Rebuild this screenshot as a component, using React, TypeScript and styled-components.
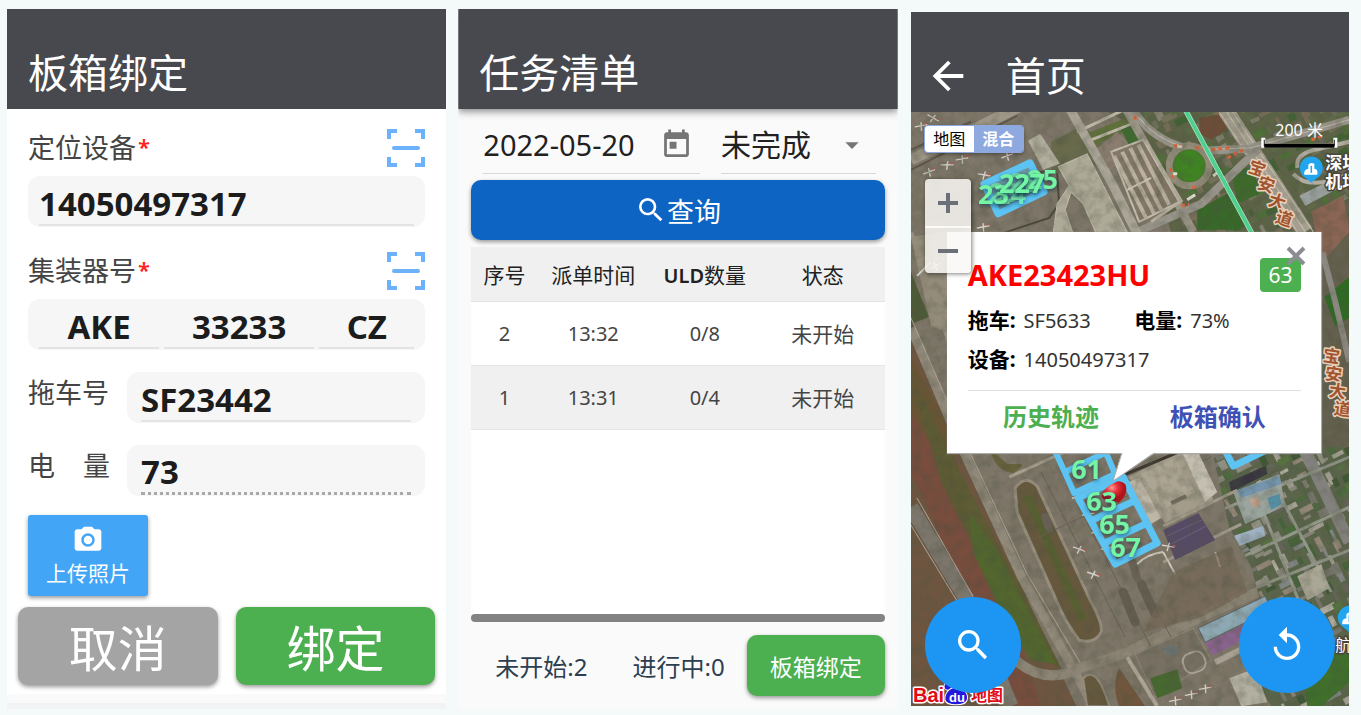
import React from "react";
import styled, { createGlobalStyle, css } from "styled-components";
import {
  MdArrowBack,
  MdArrowDropDown,
  MdPhotoCamera,
  MdReplay,
  MdSearch,
  MdToday,
} from "react-icons/md";

const GlobalStyle = createGlobalStyle`
  *, *::before, *::after { box-sizing: border-box; }
  body {
    margin: 0;
    background: #f4faf9;
    font-family: "Noto Sans", "Noto Sans CJK SC", sans-serif;
    color: #212121;
  }
  button, input, select {
    font-family: inherit;
    color: inherit;
    margin: 0;
    padding: 0;
    border: 0;
    background: none;
  }
  button { cursor: pointer; }
  svg { display: block; }
`;

/* ---------- shared shell ---------- */

const Page = styled.main`
  display: grid;
  grid-template-columns: repeat(3, minmax(0, 1fr));
  gap: 12px;
  min-height: 100vh;
  padding: 9px 12px 6px 7px;
`;

const Screen = styled.section<{ $bg: string }>`
  display: flex;
  flex-direction: column;
  min-width: 0;
  background: ${(p) => p.$bg};
`;

const MapScreen = styled(Screen)`
  margin: 3px 0 3px 1px;
`;

const AppBar = styled.header<{ $raised?: boolean }>`
  display: flex;
  align-items: center;
  gap: 42px;
  height: 100px;
  padding: 40px 21px 12px;
  background: #47494e;
  color: #fff;
  z-index: 1;
  ${(p) =>
    p.$raised &&
    css`
      box-shadow: 0 2px 8px rgba(0, 0, 0, 0.5);
      clip-path: inset(0 0 -12px 0);
    `}
`;

const AppTitle = styled.h1`
  margin: 0;
  font-size: 40px;
  line-height: 48px;
  font-weight: 400;
`;

const BackButton = styled.button`
  display: flex;
  align-items: center;
  justify-content: center;
  width: 32px;
  height: 48px;
  svg {
    flex: none;
  }
`;

const RaisedButton = styled.button<{ $color: string }>`
  display: flex;
  align-items: center;
  justify-content: center;
  border-radius: 10px;
  background: ${(p) => p.$color};
  color: #fff;
  box-shadow: 0 2px 4px rgba(0, 0, 0, 0.4);
`;

/* ---------- binding form ---------- */

const Form = styled.form`
  display: flex;
  flex-direction: column;
  flex: 1;
  padding-top: 20px;
`;

const Fields = styled.div`
  display: flex;
  flex-direction: column;
  gap: 22px;
  padding: 0 21px;
`;

const StackedField = styled.div`
  display: flex;
  flex-direction: column;
  gap: 9px;
  & + & {
    margin-top: 3px;
  }
`;

const LabelRow = styled.div`
  display: flex;
  align-items: center;
  justify-content: space-between;
  height: 38px;
`;

const FieldLabel = styled.label`
  display: flex;
  justify-content: space-between;
  font-size: 27px;
  line-height: 40px;
  color: #444;
`;

const Required = styled.span`
  margin-left: 2px;
  font-size: 22px;
  font-weight: 600;
  line-height: 36px;
  color: #f22;
`;

const InlineField = styled.div`
  display: grid;
  grid-template-columns: 82px minmax(0, 1fr);
  column-gap: 17px;
  align-items: start;
  ${FieldLabel} {
    padding-top: 1px;
  }
`;

const FieldBox = styled.div<{ $inset: number }>`
  display: flex;
  gap: 5px;
  height: 51px;
  padding: 0 ${(p) => p.$inset}px;
  border-radius: 12px;
  background: #f6f6f6;
`;

const BoldInput = styled.input<{ $grow?: number; $center?: boolean; $dotted?: boolean }>`
  flex: ${(p) => p.$grow ?? 1} 1 0;
  min-width: 0;
  width: 0;
  height: 50px;
  padding-top: 6px;
  font-size: 33px;
  font-weight: 700;
  color: #1c1c1c;
  text-align: ${(p) => (p.$center ? "center" : "left")};
  border-bottom: ${(p) => (p.$dotted ? "3px dotted #a9a9a9" : "2px solid #e4e4e4")};
  outline: none;
`;

const UploadButton = styled(RaisedButton)`
  flex-direction: column;
  gap: 2px;
  width: 120px;
  height: 81px;
  margin: 19px 21px 0;
  border-radius: 3px;
  font-size: 21px;
  line-height: 30px;
`;

const FormActions = styled.div`
  display: flex;
  gap: 18px;
  padding: 11px 11px 9px;
`;

const ActionButton = styled(RaisedButton)`
  flex: 1;
  height: 78px;
  padding-top: 4px;
  font-size: 49px;
  line-height: 60px;
`;

const FormFooter = styled.div`
  flex: 1;
  min-height: 15px;
  background: #fafafa;
  border-bottom: 6px solid #f2f3f4;
`;

/* ---------- task list ---------- */

const TaskBody = styled.div`
  display: flex;
  flex-direction: column;
  flex: 1;
  padding: 10px 13px 13px;
`;

const Filters = styled.div`
  display: grid;
  grid-template-columns: 217fr 155fr;
  gap: 21px;
  padding: 0 9px 0 12px;
`;

const FilterBox = styled.div`
  position: relative;
  display: flex;
  align-items: center;
  height: 55px;
  padding-bottom: 3px;
  border-bottom: 1px solid #d8d8d8;
`;

const DateInput = styled.input`
  flex: 1;
  min-width: 0;
  width: 0;
  font-size: 29px;
  outline: none;
`;

const CalendarButton = styled.button`
  margin-right: 7px;
  font-size: 33px;
  color: #757575;
`;

const StatusSelect = styled.select`
  flex: 1;
  width: 100%;
  appearance: none;
  font-size: 30px;
`;

const SelectArrow = styled.span`
  position: absolute;
  right: 8px;
  font-size: 32px;
  color: #757575;
  pointer-events: none;
`;

const QueryButton = styled(RaisedButton)`
  flex: none;
  height: 60px;
  margin: 6px 0 7px;
  font-size: 27px;
  svg {
    font-size: 32px;
  }
`;

const TableWrap = styled.div`
  flex: 1;
  background: #fff;
`;

const TaskTable = styled.table`
  width: 100%;
  table-layout: fixed;
  border-collapse: collapse;
  text-align: center;
`;

const Col = styled.col<{ $w: number }>`
  width: ${(p) => p.$w}%;
`;

const HeadCell = styled.th`
  height: 54px;
  padding: 0;
  background: #f0f0f0;
  border-bottom: 1px solid #e2e2e2;
  font-size: 21px;
  font-weight: 400;
  white-space: nowrap;
  b {
    font-size: 20px;
    font-weight: 600;
  }
`;

const Row = styled.tr<{ $alt?: boolean }>`
  background: ${(p) => (p.$alt ? "#f0f0f0" : "#fff")};
`;

const Cell = styled.td<{ $text?: boolean }>`
  height: 64px;
  padding: 0;
  border-bottom: 1px solid #e6e6e6;
  font-size: ${(p) => (p.$text ? 21 : 20)}px;
  color: #444;
`;

const ScrollThumb = styled.div`
  height: 8px;
  border-radius: 4px;
  background: #838383;
`;

const TaskFooter = styled.footer`
  display: flex;
  align-items: center;
  justify-content: space-between;
  padding: 13px 0 0 24px;
  font-size: 24px;
  color: #2c3e50;
`;

const Counts = styled.div`
  display: flex;
  gap: 45px;
  white-space: nowrap;
`;

const BindButton = styled(RaisedButton)`
  flex: none;
  width: 138px;
  height: 61px;
  font-size: 23px;
`;

/* ---------- map ---------- */

const MapArea = styled.div`
  position: relative;
  flex: 1;
  min-height: 594px;
  overflow: hidden;
  background: #7d7466;
`;

const MapCanvas = styled.svg`
  position: absolute;
  inset: 0;
  width: 100%;
  height: 100%;
`;

const InfoWindow = styled.article`
  position: absolute;
  top: 120px;
  left: 36px;
  right: 27px;
  padding: 26px 20px 10px 21px;
  background: #fff;
  border: 1px solid #ababab;
  border-width: 0 1px 1px 0;
  box-shadow: 0 0 1px #999;
`;

const Tail = styled.svg`
  position: absolute;
  top: 220px;
  left: 164px;
`;

const InfoHead = styled.header`
  display: flex;
  align-items: center;
  justify-content: space-between;
  margin-bottom: 9px;
`;

const InfoTitle = styled.h2`
  margin: 0;
  font-size: 29px;
  line-height: 34px;
  color: #f00;
`;

const Badge = styled.span`
  width: 41px;
  border-radius: 4px;
  background: #4caf50;
  color: #fff;
  font-size: 21px;
  line-height: 34px;
  text-align: center;
`;

const CloseButton = styled.button`
  position: absolute;
  top: 14px;
  right: 15px;
`;

const InfoGrid = styled.dl`
  display: grid;
  grid-template-columns: 1fr 1fr;
  margin: 0 0 11px;
`;

const InfoItem = styled.div<{ $wide?: boolean }>`
  display: flex;
  gap: 8px;
  grid-column: ${(p) => (p.$wide ? "1 / -1" : "auto")};
  line-height: 39px;
  dt {
    font-size: 21px;
    font-weight: 700;
    color: #000;
  }
  dd {
    margin: 0;
    font-size: 20px;
    color: #333;
  }
`;

const InfoLinks = styled.nav`
  display: grid;
  grid-template-columns: 1fr 1fr;
  border-top: 1px solid #e0e0e0;
`;

const InfoLink = styled.a<{ $color: string }>`
  font-size: 24px;
  line-height: 52px;
  font-weight: 700;
  text-align: center;
  text-decoration: none;
  color: ${(p) => p.$color};
`;

const MapTypes = styled.div`
  position: absolute;
  top: 14px;
  left: 14px;
  display: flex;
  border-radius: 3px;
  overflow: hidden;
  box-shadow: 0 0 0 1px #8ea8e0, 0 2px 4px rgba(0, 0, 0, 0.4);
`;

const MapType = styled.button<{ $active?: boolean }>`
  width: 49px;
  height: 26px;
  font-size: 16px;
  line-height: 24px;
  background: ${(p) => (p.$active ? "#8ea8e0" : "#fff")};
  color: ${(p) => (p.$active ? "#fff" : "#000")};
  font-weight: ${(p) => (p.$active ? 700 : 400)};
`;

const ZoomControl = styled.div`
  position: absolute;
  top: 67px;
  left: 14px;
  width: 46px;
  border-radius: 4px;
  background: rgba(250, 248, 246, 0.85);
  box-shadow: 1px 1px 4px rgba(0, 0, 0, 0.5);
`;

const ZoomButton = styled.button`
  display: flex;
  align-items: center;
  justify-content: center;
  width: 46px;
  height: 47px;
  & + & {
    border-top: 2px solid rgba(255, 255, 255, 0.8);
  }
`;

const Fabs = styled.div`
  position: absolute;
  left: 14px;
  right: 14px;
  bottom: 13px;
  display: flex;
  justify-content: space-between;
`;

const Fab = styled.button`
  display: flex;
  align-items: center;
  justify-content: center;
  width: 96px;
  height: 96px;
  border-radius: 50%;
  background: #1d96f3;
  color: #fff;
  font-size: 40px;
`;

const MapText = styled.text<{ $size: number; $fill: string; $halo: string; $bold?: boolean }>`
  font-size: ${(p) => p.$size}px;
  font-weight: ${(p) => (p.$bold ? 700 : 400)};
  fill: ${(p) => p.$fill};
  stroke: ${(p) => p.$halo};
  stroke-width: 3px;
  stroke-linejoin: round;
  paint-order: stroke;
`;

const SpotText = styled.text`
  font-size: 27px;
  font-weight: 700;
  fill: #74f5a6;
  filter: drop-shadow(0 2px 2px rgba(0, 40, 60, 0.6));
`;

/* ---------- map drawing ---------- */

type Block = { x: number; y: number; w: number; h: number; c: string };

// Fixed-seed generator, so the town looks the same on every render.
function makeBlocks(seed: number, x0: number, y0: number, x1: number, y1: number, palette: string[]) {
  let s = seed;
  const rnd = () => {
    s = (s * 1664525 + 1013904223) % 4294967296;
    return s / 4294967296;
  };
  const out: Block[] = [];
  for (let y = y0; y < y1; y += 11) {
    for (let x = x0; x < x1; x += 13) {
      const tall = rnd() > 0.5;
      out.push({
        x: x + rnd() * 6,
        y: y + rnd() * 5,
        w: tall ? 3 + rnd() * 5 : 7 + rnd() * 10,
        h: tall ? 8 + rnd() * 9 : 3 + rnd() * 5,
        c: palette[Math.floor(rnd() * palette.length)],
      });
    }
  }
  return out;
}

const TOWN = ["#44633a", "#55743f", "#3c5733", "#96948a", "#aaa59a", "#7b7872", "#66645c", "#bbb7ab", "#85888a", "#9a8b7e", "#4b6c3c", "#8d8a80"];
const PARK = ["#3f6232", "#4d7236", "#5c6b48", "#77745f", "#8b887a", "#606a4a", "#7d705d", "#6f6c60"];
const APRON = ["#857b6c", "#786f61", "#7f7567", "#887e70", "#756c5f"];

const town = makeBlocks(7, 60, 440, 420, 780, TOWN);
const park = makeBlocks(23, 190, 60, 440, 420, PARK);
const apron = makeBlocks(91, -300, -40, 340, 760, APRON);

const Blocks = ({ items, opacity = 1 }: { items: Block[]; opacity?: number }) => (
  <g transform="rotate(-27)" opacity={opacity}>
    {items.map((b, i) => (
      <rect key={i} x={b.x} y={b.y} width={b.w} height={b.h} fill={b.c} />
    ))}
  </g>
);

const planes = [
  [10, 14, 20], [22, 6, 60], [18, 60, 10], [36, 53, 30], [51, 47, 20], [96, 44, 10], [73, 63, 40], [72, 115, 20],
  [24, 154, 0], [123, 310, 10], [132, 329, 30], [167, 384, 10], [177, 402, 20], [186, 419, 10], [196, 436, 20],
  [168, 437, 50], [182, 462, 50], [257, 434, 40], [264, 588, 20], [280, 582, 20], [294, 576, 20],
];

const Plane = ({ at }: { at: number[] }) => (
  <g transform={`translate(${at[0]} ${at[1]}) rotate(${at[2]})`} stroke="#d6d1c8" strokeWidth="1.400" strokeLinecap="round">
    <path d="M-5 3 5-3M-1-3 2 4" />
    <path d="M3-3 5-5" stroke="#b0584e" />
  </g>
);

const Pin = ({ x, y }: { x: number; y: number }) => (
  <g transform={`translate(${x} ${y})`}>
    <path d="M0 13-6 8A11.500 11.500 0 1 1 6 8Z" fill="#21a5ee" />
    <path d="M-7 5Q-8 0-3-1V-5Q-1-8 3-6V-1Q7-1 6 5Z" fill="#fff" />
    <path d="M0-4V3" stroke="#21a5ee" strokeWidth="1.500" />
  </g>
);

const roadNames = [
  { chars: [[336, 60], [345, 76], [356, 93], [363, 110]], rot: 18 },
  { chars: [[411, 249], [413, 267], [417, 284], [422, 302]], rot: 8 },
];

const SatelliteMap = () => (
  <MapCanvas viewBox="0 0 438 594" preserveAspectRatio="xMidYMid slice" role="img" aria-label="卫星地图">
    <defs>
      <clipPath id="town">
        <path d="M300 335H438V594H360L340 560 352 500 340 455 318 415Z" />
      </clipPath>
      <clipPath id="park">
        <path d="M196 0H438V345H380V130H262L244 60 215 10Z" />
      </clipPath>
      <filter id="grain" x="0" y="0" width="100%" height="100%" colorInterpolationFilters="sRGB">
        <feTurbulence type="fractalNoise" baseFrequency="0.09" numOctaves="4" seed="4" />
        <feColorMatrix values="0 0 0 0 0.300 0 0 0 0 0.320 0 0 0 0 0.250 0 0 0 2.200 -0.850" />
      </filter>
      <filter id="soft" x="0" y="0" width="100%" height="100%">
        <feGaussianBlur stdDeviation="0.600" />
      </filter>
      <radialGradient id="marker" cx="0.4" cy="0.3">
        <stop offset="0" stopColor="#ff9a90" />
        <stop offset="0.500" stopColor="#e8303a" />
        <stop offset="1" stopColor="#b0141c" />
      </radialGradient>
    </defs>

    <g filter="url(#soft)">
      <rect width="438" height="594" fill="#7d7668" />
      <Blocks items={apron} opacity={0.3} />

      {/* grass and runway on the west side */}
      <path d="M0 206 49 341 111 475 165 594H0Z" fill="#6e5540" />
      <path d="M0 160 18 205 0 212Z" fill="#4e5b38" />
      <path d="M0 245 30 300 60 400 40 400 0 320Z" fill="#66552f" opacity="0.700" />
      <path d="M0 300 60 400 130 594H108L0 360Z" fill="#784d3c" />
      <path d="M0 265 34 330 70 400 110 475 152 560 120 530 70 450 30 370Z" fill="#5d5b34" />
      <path d="M58 400 84 436 145 552 120 548 90 500 62 440Z" fill="#52662d" />
      <path d="M0 395 56 488 100 594" stroke="#7c766c" strokeWidth="15" fill="none" />
      <path d="M6 386 62 484M-8 400 48 492" stroke="#aaa396" strokeWidth="1" fill="none" />
      <path d="M0 216 49 332 111 466 165 562 182 594" stroke="#91897a" strokeWidth="9" fill="none" />
      <path d="M0 206 54 330 116 462 170 552" stroke="#aaa293" strokeWidth="1" fill="none" />
      <path d="M0 120 20 180 60 290" stroke="#9a9182" strokeWidth="4" fill="none" />
      <path d="M72 330 96 352 108 352Q116 352 102 361 90 360 84 350L60 300Z" fill="#66603a" />
      <path d="M60 300 92 337" stroke="#5f5e36" strokeWidth="8" />
      <path d="M104 376Q114 362 126 374L180 490Q192 512 190 520 184 532 168 528 154 510 146 490L106 400Z" fill="#66593c" stroke="#968d7d" strokeWidth="3" />
      <path d="M116 384 172 508" stroke="#585f30" strokeWidth="8" />
      <path d="M72 300 94 337M98 365 164 335" stroke="#a79f90" strokeWidth="3" />
      <path d="M96 540Q130 576 168 556L214 541 300 500 360 474" stroke="#8c8475" strokeWidth="10" fill="none" />
      <path d="M172 566Q186 552 198 594H176Z" fill="#66593d" stroke="#958b7c" strokeWidth="2" />
      <path d="M208 556 234 594H208Q200 574 208 556Z" fill="#70563d" />
      <path d="M128 425 300 345M130 360 214 525M150 360 240 535M214 440 268 540" stroke="#6b6357" strokeWidth="1" />
      <path d="M212 480 224 510M230 472 244 502" stroke="#645c51" strokeWidth="9" strokeLinecap="round" />
      <path d="M218 440 226 466M134 405 138 416" stroke="#6a6257" strokeWidth="8" strokeLinecap="round" />

      {/* aprons and taxiway at the north side */}
      <path d="M0 48 70 14 110-6" stroke="#9d9585" strokeWidth="11" fill="none" />
      <path d="M0 38 60 10M0 58 106 4" stroke="#5e564b" strokeWidth="2" fill="none" />
      <path d="M120 60 146 60 148 92 138 106 90 122" stroke="#4b463e" strokeWidth="2" fill="none" />
      <path d="M0 125 60 116V230L20 214Z" fill="#948c7a" />
      <path d="M20 150 6 164" stroke="#d9d6cf" strokeWidth="2" />

      {/* roads and green areas at the north-east side */}
      <g clipPath="url(#park)">
        <rect x="140" width="298" height="345" fill="#5d6446" />
        <Blocks items={park} opacity={0.85} />
        <path d="M288 6 312 2 318 16 300 28 288 22Z" fill="#6d4d38" />
        <path d="M286 98 316 82 332 96 330 118H286Z" fill="#38672a" />
        <path d="M320 58 342 56 348 82 326 92Z" fill="#3e6a2c" />
        <path d="M398 110 438 88V345H411V150Z" fill="#65604f" />
        <path d="M400 100 432 84 438 120 411 150Z" fill="#8b6554" />
        <path d="M388 84 424 66 428 76 394 94Z" fill="#9aa2a0" />
        <path d="M413 185 438 165V206L424 214Z" fill="#2f6a24" />
        <path d="M411 140 424 190 438 250" stroke="#8a8880" strokeWidth="6" fill="none" />
      </g>
      <path d="M140 30 172 14 200 40 176 60 140 62Z" fill="#686a4c" />
      <path d="M175 22 225 2 228 14 182 34Z" fill="#5f6f3a" />
      <path d="M166 20 230-10M180 28 226 10" stroke="#bdb7a8" strokeWidth="3" />
      <path d="M182 40 206 20 226 40 196 60Z" fill="#8b7d70" />
      <path d="M210 18 224 12 230 30 218 34Z" fill="#3f6b30" />
      <path d="M314-2 394 120" stroke="#a59f90" strokeWidth="16" />
      <path d="M314-2 394 120M308 0 386 120M321 0 402 120" stroke="#c6bfae" strokeWidth="1" />
      <path d="M214-4 244 50 282 120" stroke="#9c9688" strokeWidth="8" fill="none" />
      <path d="M222-2Q244 34 290 39L337 37 438 8M346 38 290 92 226 120" stroke="#98948a" strokeWidth="8" fill="none" />
      <path d="M228 6Q250 34 290 38L340 36 438 8" stroke="#c0baad" strokeWidth="1" fill="none" />
      <circle cx="278" cy="54" r="20" fill="#4a7a2e" stroke="#938c7a" strokeWidth="7" />
      <circle cx="278" cy="54" r="15" fill="#3f8424" />
      <path d="M224 4v5M262 34h8M284 36h8M300 38 318 36M259 56l3 12M281 76l8-2M270 94l8-2M262 78l3 6M316 46 332 38M400 28 412 24" stroke="#d8663a" strokeWidth="3" strokeDasharray="4 3" />
      <path d="M266 35h5M276 88l8-5M262 62h4M302 64l5-4" stroke="#e0dccf" strokeWidth="3" />
      <path d="M386 56Q384 42 404 38L438 30M382 62Q398 80 438 62" stroke="#b2ada2" strokeWidth="4" fill="none" />

      {/* terminal buildings */}
      <path d="M117 29 129 22 149 52 132 58Z" fill="#b3af9e" />
      <path d="M147 55 176 42 218 124H186L172 92 160 80 154 98 162 122H142L146 92 158 74Z" fill="#aeaa98" stroke="#c4bfb0" />
      <path d="M158-4 200 70 226 122" stroke="#aaa596" strokeWidth="9" fill="none" />
      <path d="M200 40 232 28 268 90 228 110Z" fill="#847868" stroke="#c4bdae" strokeWidth="2" />
      <path d="M203 44 235 106M211 40 243 102M219 36 250 98M227 33 258 93" stroke="#bbb2a2" strokeWidth="4" />
      <path d="M216 78 240 66" stroke="#cfc7b6" strokeWidth="2" />
      <path d="M234 28 270 89 240 110" stroke="#b5ad9e" strokeWidth="3" fill="none" />

      {/* town on the east side */}
      <g clipPath="url(#town)">
        <rect x="290" y="300" width="148" height="294" fill="#5a6549" />
        <Blocks items={town} opacity={0.9} />
        <path d="M392 335 438 430" stroke="#83817d" strokeWidth="12" />
        <path d="M305 400 438 345M320 450 438 395M334 480 438 438M352 400 400 520M372 390 420 480" stroke="#929789" strokeWidth="3" />
        <path d="M322 380 368 362 374 394 334 412Z" fill="#9ba59f" />
        <path d="M326 378 368 364 370 372 330 386Z" fill="#7495ae" />
        <path d="M356 386 368 382 370 392 360 398Z" fill="#5391a8" />
        <path d="M338 388 346 384 350 392 342 396Z" fill="#c2a18c" />
        <path d="M322 424 352 414 354 424 328 434Z" fill="#a0b3c4" />
        <path d="M386 464 410 452 418 476 396 488Z" fill="#aaa796" />
        <path d="M318 370 354 354 356 362 320 380Z" fill="#37343f" />
        <path d="M392 560 438 530V570L410 594H396Z" fill="#3f6f2c" />
      </g>
      <path d="M217 365 270 338H284L302 388 254 411Z" fill="#a39c8b" />
      <path d="M230 362 264 346 284 380 252 398Z" fill="#ada594" />
      <path d="M270 338 284 334 306 380 294 390Z" fill="#c4bfb0" />
      <path d="M217 370 228 366 250 406 240 412Z" fill="#beb6a7" />
      <path d="M260 391 275 384" stroke="#726a5f" strokeWidth="4" />
      <path d="M210 364 272 338" stroke="#3b352e" strokeWidth="3" />
      <path d="M252 414 326 378M252 450 330 412" stroke="#a29a8c" strokeWidth="3" />
      <path d="M252 418 287 401 304 428 264 448Z" fill="#574c66" />
      <path d="M260 432 295 414M256 424 290 408" stroke="#6d627b" strokeWidth="1" />
      <path d="M226 452Q236 442 252 440M252 440 264 462M304 440 309 455" stroke="#cfc8b9" strokeWidth="2" fill="none" />
      <path d="M262 460 320 434 336 480 290 505 232 520Z" fill="#756656" opacity="0.700" />
      <path d="M224 542 282 516 300 548 244 585Z" fill="#787163" stroke="#8f8778" />
      <rect x="272" y="540" width="22" height="20" rx="8" fill="none" stroke="#a8a193" strokeWidth="2" transform="rotate(-20 283 550)" />
      <ellipse cx="260" cy="538" rx="8" ry="5" fill="#6d7575" />
      <path d="M287 516 354 484 360 498 294 530Z" fill="#8ea9b4" stroke="#59636a" />
      <path d="M294 531 360 499 364 512 302 543Z" fill="#8b6490" />
      <path d="M304 550 370 518" stroke="#a8a193" strokeWidth="6" />
      <path d="M239 566 266 557 271 576 246 586Z" fill="#47682f" />
      <path d="M318 566 344 556 356 590 330 594Z" fill="#b3b0a2" />
      <path d="M216 545 246 594" stroke="#b1a898" strokeWidth="4" />

      {planes.map((p, i) => (
        <Plane key={i} at={p} />
      ))}
      <rect width="438" height="594" filter="url(#grain)" opacity="0.350" />
    </g>

    {/* metro line and parking-stand outlines */}
    <path d="M274-2 341 122" stroke="#d8efe0" strokeWidth="5" />
    <path d="M274-2 341 122" stroke="#4fd08f" strokeWidth="4" />
    <g fill="none" stroke="#5cc3f2" strokeWidth="7" strokeLinejoin="round">
      <path d="M73 72 119 51 133 80 87 102Z" fill="rgba(92,195,242,0.450)" />
      <path d="M140 330 163 381 204 362 190 330M154 360 204 336" strokeWidth="6" />
      <path d="M167 386 212 365 246 431 204 452Z" />
      <path d="M179 409 225 388M191 432 236 411" />
      <path d="M312 335 322 354 355 338" />
    </g>
    <path d="M203 371C196 374 190 380 191 386 196 390 203 386 207 391 214 386 217 378 214 372Q208 367 203 371Z" fill="url(#marker)" />

    <g opacity="0.700">
      <SpotText x="78" y="90">29</SpotText>
      <SpotText x="84" y="92">24</SpotText>
      <SpotText x="98" y="80">28</SpotText>
    </g>
    <SpotText x="67" y="92">23</SpotText>
    <SpotText x="116" y="77">25</SpotText>
    <SpotText x="103" y="81">27</SpotText>
    <SpotText x="88" y="81">22</SpotText>
    <SpotText x="160" y="367">61</SpotText>
    <SpotText x="175" y="399">63</SpotText>
    <SpotText x="188" y="422">65</SpotText>
    <SpotText x="199" y="445">67</SpotText>

    {roadNames.map((name) =>
      "宝安大道".split("").map((ch, i) => (
        <MapText
          key={ch}
          $size={17}
          $fill="#a2542f"
          $halo="#e9d2bd"
          $bold
          transform={`translate(${name.chars[i][0]} ${name.chars[i][1]}) rotate(${name.rot})`}
        >
          {ch}
        </MapText>
      ))
    )}
    <Pin x={400} y={58} />
    <MapText x="414" y="57" $size={17} $fill="#fff" $halo="#4a443a" $bold>深圳</MapText>
    <MapText x="414" y="76" $size={17} $fill="#fff" $halo="#4a443a" $bold>机场</MapText>
    <Pin x={438} y={507} />
    <MapText x="424" y="539" $size={16} $fill="#fff" $halo="#4a443a">航</MapText>

    {/* scale bar */}
    <text x="364" y="24" fontSize="16" fill="#fff">200 米</text>
    <path d="M352 26V34H424V26" fill="none" stroke="#fff" strokeWidth="4" />
    <path d="M353 28V34H423V28" fill="none" stroke="#222" strokeWidth="1" />
    <path d="M353 34H423" stroke="#000" strokeWidth="4" />

    {/* provider logo */}
    <g fontFamily="Liberation Sans, Noto Sans CJK SC, sans-serif">
      <MapText x="2" y="590" $size={20} $fill="#e10b17" $halo="#fff" $bold>Bai</MapText>
      <g fill="#2319dc" stroke="#fff" strokeWidth="1">
        <circle cx="37" cy="574" r="4" />
        <circle cx="44" cy="570" r="4" />
        <circle cx="53" cy="574" r="4" />
        <path d="M45 575C53 575 58 582 56 588 54 594 36 594 34 588 33 582 38 575 45 575Z" />
      </g>
      <text x="38" y="590" fontSize="13" fontWeight="700" fill="#fff">du</text>
      <MapText x="60" y="589" $size={16} $fill="#e10b17" $halo="#fff" $bold>地图</MapText>
    </g>
  </MapCanvas>
);

/* ---------- small icons ---------- */

const ScanIcon = () => (
  <svg width="38" height="38" viewBox="0 0 38 38" fill="none" stroke="#6cb2fa" strokeWidth="4" aria-hidden="true">
    <path d="M2 10V2H10M28 2H36V10M36 28V36H28M10 36H2V28" />
    <path d="M7 19H31" strokeLinecap="round" />
  </svg>
);

const Scan = ({ label }: { label: string }) => (
  <button type="button" aria-label={label}>
    <ScanIcon />
  </button>
);

/* ---------- screens ---------- */

const BindScreen = () => (
  <Screen $bg="#fff">
    <AppBar>
      <AppTitle>板箱绑定</AppTitle>
    </AppBar>
    <Form onSubmit={(e) => e.preventDefault()}>
      <Fields>
        <StackedField>
          <LabelRow>
            <FieldLabel htmlFor="device">
              定位设备<Required>*</Required>
            </FieldLabel>
            <Scan label="扫描定位设备" />
          </LabelRow>
          <FieldBox $inset={11}>
            <BoldInput id="device" defaultValue="14050497317" />
          </FieldBox>
        </StackedField>
        <StackedField>
          <LabelRow>
            <FieldLabel htmlFor="uld-type">
              集装器号<Required>*</Required>
            </FieldLabel>
            <Scan label="扫描集装器号" />
          </LabelRow>
          <FieldBox $inset={11}>
            <BoldInput id="uld-type" $grow={120} $center defaultValue="AKE" />
            <BoldInput aria-label="集装器编号" $grow={150} $center defaultValue="33233" />
            <BoldInput aria-label="航司代码" $grow={95} $center defaultValue="CZ" />
          </FieldBox>
        </StackedField>
        <InlineField>
          <FieldLabel htmlFor="trailer">拖车号</FieldLabel>
          <FieldBox $inset={14}>
            <BoldInput id="trailer" defaultValue="SF23442" />
          </FieldBox>
        </InlineField>
        <InlineField>
          <FieldLabel htmlFor="battery">
            <span>电</span>
            <span>量</span>
          </FieldLabel>
          <FieldBox $inset={14}>
            <BoldInput id="battery" $dotted readOnly defaultValue="73" />
          </FieldBox>
        </InlineField>
      </Fields>
      <UploadButton type="button" $color="#42a5f5">
        <MdPhotoCamera size={32} />
        上传照片
      </UploadButton>
      <FormActions>
        <ActionButton type="button" $color="#a4a4a4">取消</ActionButton>
        <ActionButton type="submit" $color="#4caf50">绑定</ActionButton>
      </FormActions>
      <FormFooter />
    </Form>
  </Screen>
);

const tasks = [
  { id: 2, time: "13:32", count: "0/8", status: "未开始" },
  { id: 1, time: "13:31", count: "0/4", status: "未开始" },
];

const TaskScreen = () => (
  <Screen $bg="#fafafa">
    <AppBar $raised>
      <AppTitle>任务清单</AppTitle>
    </AppBar>
    <TaskBody>
      <Filters>
        <FilterBox>
          <DateInput aria-label="日期" defaultValue="2022-05-20" />
          <CalendarButton type="button" aria-label="选择日期">
            <MdToday />
          </CalendarButton>
        </FilterBox>
        <FilterBox>
          <StatusSelect aria-label="状态" defaultValue="未完成">
            <option>未完成</option>
            <option>已完成</option>
          </StatusSelect>
          <SelectArrow>
            <MdArrowDropDown />
          </SelectArrow>
        </FilterBox>
      </Filters>
      <QueryButton type="button" $color="#0e64c2">
        <MdSearch />
        查询
      </QueryButton>
      <TableWrap>
        <TaskTable>
          <colgroup>
            <Col $w={16} />
            <Col $w={27} />
            <Col $w={27} />
            <Col $w={30} />
          </colgroup>
          <thead>
            <tr>
              <HeadCell>序号</HeadCell>
              <HeadCell>派单时间</HeadCell>
              <HeadCell><b>ULD</b>数量</HeadCell>
              <HeadCell>状态</HeadCell>
            </tr>
          </thead>
          <tbody>
            {tasks.map((t, i) => (
              <Row key={t.id} $alt={i % 2 === 1}>
                <Cell>{t.id}</Cell>
                <Cell>{t.time}</Cell>
                <Cell>{t.count}</Cell>
                <Cell $text>{t.status}</Cell>
              </Row>
            ))}
          </tbody>
        </TaskTable>
      </TableWrap>
      <ScrollThumb />
      <TaskFooter>
        <Counts>
          <span>未开始:2</span>
          <span>进行中:0</span>
        </Counts>
        <BindButton type="button" $color="#4caf50">板箱绑定</BindButton>
      </TaskFooter>
    </TaskBody>
  </Screen>
);

const HomeScreen = () => (
  <MapScreen $bg="#fff">
    <AppBar>
      <BackButton type="button" aria-label="返回">
        <MdArrowBack size={46} />
      </BackButton>
      <AppTitle>首页</AppTitle>
    </AppBar>
    <MapArea>
      <SatelliteMap />
      <InfoWindow>
        <InfoHead>
          <InfoTitle>AKE23423HU</InfoTitle>
          <Badge>63</Badge>
        </InfoHead>
        <InfoGrid>
          <InfoItem>
            <dt>拖车:</dt>
            <dd>SF5633</dd>
          </InfoItem>
          <InfoItem>
            <dt>电量:</dt>
            <dd>73%</dd>
          </InfoItem>
          <InfoItem $wide>
            <dt>设备:</dt>
            <dd>14050497317</dd>
          </InfoItem>
        </InfoGrid>
        <InfoLinks>
          <InfoLink href="#history" $color="#4caf50">历史轨迹</InfoLink>
          <InfoLink href="#confirm" $color="#3f51b5">板箱确认</InfoLink>
        </InfoLinks>
        <CloseButton type="button" aria-label="关闭">
          <svg width="20" height="20" viewBox="0 0 20 20" stroke="#8b8d90" strokeWidth="4">
            <path d="M2 2 18 18M18 2 2 18" />
          </svg>
        </CloseButton>
        <Tail width="46" height="32" viewBox="0 0 46 32">
          <path d="M11 0 2 29 44 0Z" fill="#fff" />
          <path d="M11 1 2 29 44 1" fill="none" stroke="#ababab" />
        </Tail>
      </InfoWindow>
      <MapTypes>
        <MapType type="button">地图</MapType>
        <MapType type="button" $active>混合</MapType>
      </MapTypes>
      <ZoomControl>
        <ZoomButton type="button" aria-label="放大">
          <svg width="20" height="20" viewBox="0 0 20 20" stroke="#6b7078" strokeWidth="4">
            <path d="M10 0V20M0 10H20" />
          </svg>
        </ZoomButton>
        <ZoomButton type="button" aria-label="缩小">
          <svg width="20" height="20" viewBox="0 0 20 20" stroke="#6b7078" strokeWidth="4">
            <path d="M0 10H20" />
          </svg>
        </ZoomButton>
      </ZoomControl>
      <Fabs>
        <Fab type="button" aria-label="搜索">
          <MdSearch />
        </Fab>
        <Fab type="button" aria-label="刷新">
          <MdReplay />
        </Fab>
      </Fabs>
    </MapArea>
  </MapScreen>
);

export default function App() {
  return (
    <>
      <GlobalStyle />
      <Page>
        <BindScreen />
        <TaskScreen />
        <HomeScreen />
      </Page>
    </>
  );
}
